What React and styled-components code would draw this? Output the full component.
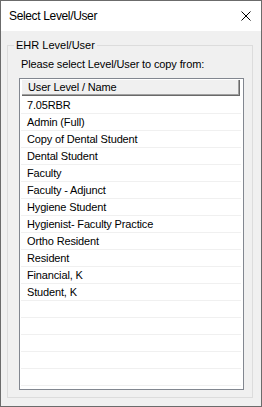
import React from 'react';
import styled, { createGlobalStyle } from 'styled-components';

const users = [
  '7.05RBR',
  'Admin (Full)',
  'Copy of Dental Student',
  'Dental Student',
  'Faculty',
  'Faculty - Adjunct',
  'Hygiene Student',
  'Hygienist- Faculty Practice',
  'Ortho Resident',
  'Resident',
  'Financial, K',
  'Student, K',
];

const EMPTY_ROWS = 6;

const GlobalStyle = createGlobalStyle`
  body {
    margin: 0;
    font-family: "Liberation Sans", Arial, sans-serif;
    color: #000;
  }
`;

const App = () => {
  const rows = [...users, ...Array(EMPTY_ROWS).fill('')];
  return (
    <>
      <GlobalStyle />
      <StyledWindow>
        <StyledTitleBar>
          <StyledTitle>Select Level/User</StyledTitle>
          <StyledClose aria-label="Close">
            <svg width="10" height="10" viewBox="0 0 10 10">
              <path d="M0.5 0.5 L9.5 9.5 M9.5 0.5 L0.5 9.5" stroke="#000" strokeWidth="1" />
            </svg>
          </StyledClose>
        </StyledTitleBar>
        <StyledBody>
          <StyledGroup>
            <StyledLegend>EHR Level/User</StyledLegend>
            <StyledPrompt>Please select Level/User to copy from:</StyledPrompt>
            <StyledList>
              <StyledHeader>User Level / Name</StyledHeader>
              {rows.map((name, i) => (
                <StyledRow key={i}>{name}</StyledRow>
              ))}
            </StyledList>
          </StyledGroup>
        </StyledBody>
      </StyledWindow>
    </>
  );
};

const StyledWindow = styled.div`
  width: 262px;
  height: 407px;
  box-sizing: border-box;
  border: 1px solid #6b6b6b;
  background-color: #f0f0f0;
  display: flex;
  flex-direction: column;
`;

const StyledTitleBar = styled.div`
  height: 30px;
  background-color: #fff;
  display: flex;
  align-items: center;
  justify-content: space-between;
  padding: 0 10px 0 8px;
`;

const StyledTitle = styled.span`
  font-size: 12px;
  letter-spacing: -0.35px;
`;

const StyledClose = styled.div`
  width: 10px;
  height: 10px;
  display: flex;
  svg {
    display: block;
  }
`;

const StyledBody = styled.div`
  flex: 1;
  display: flex;
  padding: 7px 8px 8px 6px;
  min-height: 0;
`;

const StyledGroup = styled.fieldset`
  flex: 1;
  margin: 0;
  padding: 0 8px 7px 11px;
  border: 1px solid #dcdcdc;
  display: flex;
  flex-direction: column;
  min-width: 0;
  min-height: 0;
`;

const StyledLegend = styled.legend`
  margin-left: -5px;
  padding: 0 2px;
  font-size: 11px;
  line-height: 14px;
`;

const StyledPrompt = styled.div`
  font-size: 11px;
  letter-spacing: -0.12px;
  line-height: 14px;
  margin: 5px 0 0 2px;
`;

const StyledList = styled.div`
  flex: 1;
  margin-top: 7px;
  border: 1px solid #828790;
  background-color: #fff;
  padding: 0 2px 0 1px;
  overflow: hidden;
  min-height: 0;
`;

const StyledHeader = styled.div`
  height: 15px;
  margin-right: 2px;
  border-top: 1px solid #fff;
  border-left: 1px solid #fff;
  box-shadow: inset -1px -1px 0 #a0a0a0, 1px 1px 0 #696969;
  background-color: #f0f0f0;
  font-size: 11px;
  letter-spacing: -0.15px;
  line-height: 15px;
  padding-left: 6px;
  margin-bottom: 2px;
`;

const StyledRow = styled.div`
  height: 16px;
  border-bottom: 1px solid #f0f0f0;
  font-size: 11px;
  letter-spacing: -0.15px;
  line-height: 16px;
  padding-left: 6px;
  white-space: nowrap;
`;

export default App;
